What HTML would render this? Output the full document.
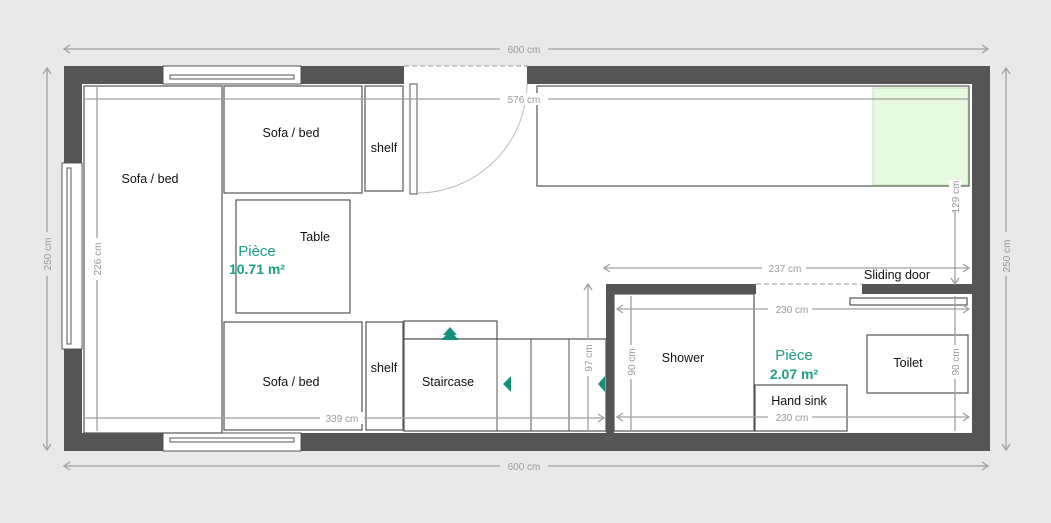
<!DOCTYPE html>
<html><head><meta charset="utf-8"><style>
html,body{margin:0;padding:0;background:#e9e9e9;}
svg{display:block;font-family:"Liberation Sans",sans-serif;}
.d{stroke:#a0a0a0;stroke-width:1.3;fill:none}
.dt{fill:#999;font-size:10px;text-anchor:middle}
.f{fill:#fff;stroke:#555;stroke-width:1.2}
.t{font-size:12.5px;fill:#111;text-anchor:middle}
.g{fill:#1a9e86;text-anchor:middle;font-weight:bold}
</style></head><body>
<svg width="1051" height="523" viewBox="0 0 1051 523">
<rect x="0" y="0" width="1051" height="523" fill="#e9e9e9"/>
<rect x="64" y="66" width="926" height="385" fill="#555"/>
<rect x="82" y="84" width="890" height="349" fill="#fff"/>
<rect x="163" y="66" width="138" height="18" fill="#fff" stroke="#555" stroke-width="1"/>
<rect x="170" y="75" width="124" height="4" fill="none" stroke="#555" stroke-width="1"/>
<rect x="163" y="433" width="138" height="18" fill="#fff" stroke="#555" stroke-width="1"/>
<rect x="170" y="438" width="124" height="4" fill="none" stroke="#555" stroke-width="1"/>
<rect x="62" y="163" width="20" height="186" fill="#fff" stroke="#555" stroke-width="1"/>
<rect x="67" y="168" width="4" height="176" fill="none" stroke="#555" stroke-width="1"/>
<rect x="404" y="66" width="123" height="18" fill="#fff"/>
<line x1="404" y1="66" x2="527" y2="66" stroke="#999" stroke-dasharray="5,3"/>
<rect x="410" y="84" width="7" height="110" fill="#fff" stroke="#555"/>
<path d="M417 193 A110 110 0 0 0 527 84" fill="none" stroke="#bbb"/>
<rect x="606" y="284" width="366" height="10" fill="#555"/>
<rect x="606" y="284" width="8" height="149" fill="#555"/>
<rect x="756" y="284" width="106" height="10" fill="#fff"/>
<line x1="756" y1="284" x2="862" y2="284" stroke="#999" stroke-dasharray="5,3"/>
<rect class="f" x="84" y="86" width="138" height="347"/>
<rect class="f" x="224" y="86" width="138" height="107"/>
<rect class="f" x="365" y="86" width="38" height="105"/>
<rect class="f" x="236" y="200" width="114" height="113"/>
<rect class="f" x="537" y="86" width="432" height="100"/>
<rect x="873" y="88" width="95" height="97" fill="#e7f9e1" stroke="#bde3ad"/>
<rect class="f" x="224" y="322" width="138" height="108"/>
<rect class="f" x="366" y="322" width="37" height="108"/>
<rect class="f" x="404" y="321" width="93" height="18"/>
<rect class="f" x="404" y="339" width="202" height="92"/>
<line x1="497" y1="339" x2="497" y2="431" stroke="#555"/>
<line x1="531" y1="339" x2="531" y2="431" stroke="#555"/>
<line x1="569" y1="339" x2="569" y2="431" stroke="#555"/>
<rect class="f" x="614" y="294" width="140" height="137"/>
<rect class="f" x="755" y="385" width="92" height="46"/>
<rect class="f" x="867" y="335" width="101" height="58"/>
<rect class="f" x="850" y="298" width="117" height="7"/>
<path d="M450 327 L443 335 L446 335 L441 340 L459 340 L454 335 L457 335 Z" fill="#178f7a"/>
<path d="M503 384 L511 376 L511 392 Z" fill="#178f7a"/>
<path d="M598 384 L605 376 L605 392 Z" fill="#178f7a"/>
<line class="d" x1="64" y1="49" x2="988" y2="49"/><path class="d" d="M70 45 L64 49 L70 53 M982 45 L988 49 L982 53"/>
<rect x="500" y="43" width="48" height="12" fill="#e9e9e9"/><text class="dt" x="524" y="53">600 cm</text>
<line class="d" x1="64" y1="466" x2="988" y2="466"/><path class="d" d="M70 462 L64 466 L70 470 M982 462 L988 466 L982 470"/>
<rect x="500" y="460" width="48" height="12" fill="#e9e9e9"/><text class="dt" x="524" y="470">600 cm</text>
<line class="d" x1="47" y1="68" x2="47" y2="450"/><path class="d" d="M43 74 L47 68 L51 74 M43 444 L47 450 L51 444"/>
<rect x="41" y="232" width="12" height="44" fill="#e9e9e9"/><text class="dt" transform="translate(51 254) rotate(-90)">250 cm</text>
<line class="d" x1="1006" y1="68" x2="1006" y2="450"/><path class="d" d="M1002 74 L1006 68 L1010 74 M1002 444 L1006 450 L1010 444"/>
<rect x="1000" y="232" width="12" height="44" fill="#e9e9e9"/><text class="dt" transform="translate(1010 256) rotate(-90)">250 cm</text>
<line class="d" x1="84" y1="99" x2="969" y2="99"/>
<rect x="500" y="93" width="48" height="12" fill="#fff"/><text class="dt" x="524" y="103">576 cm</text>
<line class="d" x1="97" y1="86" x2="97" y2="431"/>
<rect x="91" y="238" width="12" height="42" fill="#fff"/><text class="dt" transform="translate(101 259) rotate(-90)">226 cm</text>
<line class="d" x1="84" y1="418" x2="604" y2="418"/><path class="d" d="M598 414 L604 418 L598 422"/>
<rect x="320" y="412" width="44" height="12" fill="#fff"/><text class="dt" x="342" y="422">339 cm</text>
<line class="d" x1="604" y1="268" x2="969" y2="268"/><path class="d" d="M610 264 L604 268 L610 272 M963 264 L969 268 L963 272"/>
<rect x="762" y="262" width="44" height="12" fill="#fff"/><text class="dt" x="785" y="272">237 cm</text>
<line class="d" x1="955" y1="186" x2="955" y2="284"/><path class="d" d="M951 278 L955 284 L959 278"/>
<rect x="949" y="180" width="12" height="30" fill="#fff"/><text class="dt" transform="translate(959 197) rotate(-90)">129 cm</text>
<line class="d" x1="588" y1="284" x2="588" y2="431"/><path class="d" d="M584 290 L588 284 L592 290"/>
<rect x="582" y="340" width="12" height="36" fill="#fff"/><text class="dt" transform="translate(592 358) rotate(-90)">97 cm</text>
<line class="d" x1="617" y1="309" x2="969" y2="309"/><path class="d" d="M623 305 L617 309 L623 313 M963 305 L969 309 L963 313"/>
<rect x="768" y="303" width="44" height="12" fill="#fff"/><text class="dt" x="792" y="313">230 cm</text>
<line class="d" x1="617" y1="417" x2="969" y2="417"/><path class="d" d="M623 413 L617 417 L623 421 M963 413 L969 417 L963 421"/>
<rect x="768" y="411" width="44" height="12" fill="#fff"/><text class="dt" x="792" y="421">230 cm</text>
<line class="d" x1="631" y1="296" x2="631" y2="431"/>
<rect x="625" y="345" width="12" height="34" fill="#fff"/><text class="dt" transform="translate(635 362) rotate(-90)">90 cm</text>
<line class="d" x1="955" y1="296" x2="955" y2="431"/>
<rect x="949" y="345" width="12" height="34" fill="#fff"/><text class="dt" transform="translate(959 362) rotate(-90)">90 cm</text>
<text class="t" x="150" y="183">Sofa / bed</text>
<text class="t" x="291" y="137">Sofa / bed</text>
<text class="t" x="384" y="152">shelf</text>
<text class="t" x="315" y="241">Table</text>
<text class="t" x="291" y="386">Sofa / bed</text>
<text class="t" x="384" y="372">shelf</text>
<text class="t" x="448" y="386">Staircase</text>
<text class="t" x="683" y="362">Shower</text>
<text class="t" x="799" y="405">Hand sink</text>
<text class="t" x="908" y="367">Toilet</text>
<text class="t" x="897" y="279">Sliding door</text>
<text class="g" x="257" y="256" style="font-weight:normal;font-size:15px">Pièce</text>
<text class="g" x="257" y="274" style="font-size:14px">10.71 m²</text>
<text class="g" x="794" y="360" style="font-weight:normal;font-size:15px">Pièce</text>
<text class="g" x="794" y="379" style="font-size:14px">2.07 m²</text>
</svg>
</body></html>
